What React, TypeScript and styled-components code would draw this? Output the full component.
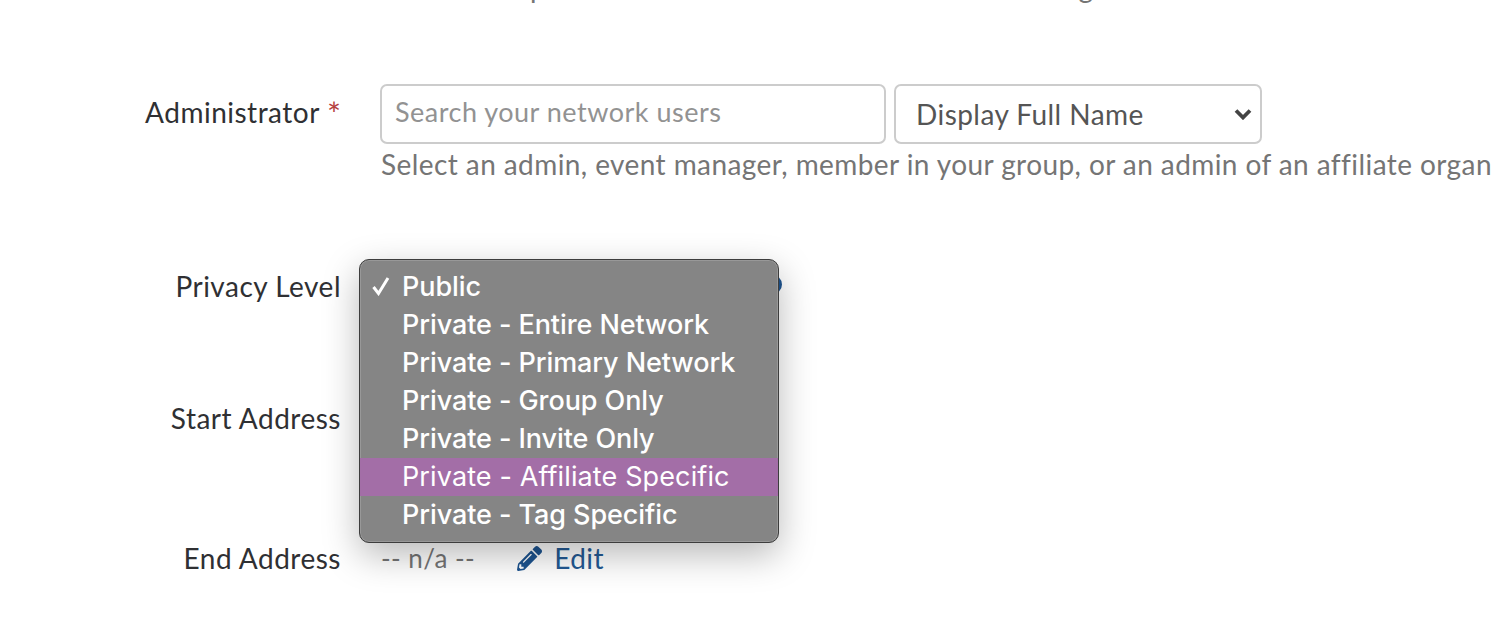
import React from "react";
import styled, { createGlobalStyle } from "styled-components";

const Global = createGlobalStyle`
  html, body { margin: 0; padding: 0; background: #fff; }
  body { font-family: "Lato", "Liberation Sans", sans-serif; overflow: hidden; }
`;

const Page = styled.div`
  position: relative;
  width: 1492px;
  height: 632px;
  overflow: hidden;
  background: #fff;
`;

const TopLine = styled.div`
  margin: -25px 0 0 381px;
  height: 25px;
  line-height: 25px;
  font-size: 28px;
  letter-spacing: 0.2px;
  color: #757575;
  white-space: nowrap;
`;

const Form = styled.div`
  display: flex;
  flex-direction: column;
  padding-top: 84px;
`;

const Row = styled.div<{ $height: number }>`
  display: grid;
  grid-template-columns: 341px 1fr;
  column-gap: 39px;
  height: ${(p) => p.$height}px;
  align-items: start;
`;

const Label = styled.div<{ $top: number }>`
  text-align: right;
  font-size: 28px;
  letter-spacing: 0.5px;
  line-height: 34px;
  color: #2f3033;
  padding-top: ${(p) => p.$top}px;
  white-space: nowrap;
`;

const Star = styled.span`
  color: #b5413f;
  font-size: 33px;
  line-height: 0;
  letter-spacing: 0;
  vertical-align: -3px;
`;

const Field = styled.div`
  display: flex;
  flex-direction: column;
  min-width: 0;
`;

const Controls = styled.div`
  display: flex;
  gap: 8px;
`;

const SearchInput = styled.div`
  box-sizing: border-box;
  width: 506px;
  height: 60px;
  border: 2px solid #cccccc;
  border-radius: 7px;
  padding: 0 13px 5px;
  display: flex;
  align-items: center;
  font-size: 27px;
  letter-spacing: 0.5px;
  color: #929292;
`;

const DisplaySelect = styled.div`
  box-sizing: border-box;
  width: 368px;
  height: 60px;
  border: 2px solid #cccccc;
  border-radius: 7px;
  padding: 0 8px 0 20px;
  display: flex;
  align-items: center;
  justify-content: space-between;
  font-size: 28px;
  letter-spacing: 0.45px;
  color: #555;
`;

const Help = styled.div`
  margin: 2px 0 0 1px;
  font-size: 28px;
  letter-spacing: 0.42px;
  line-height: 36px;
  color: #757575;
  white-space: nowrap;
`;

const ValueRow = styled.div`
  display: flex;
  align-items: center;
  height: 34px;
  margin: 10px 0 0 1px;
  font-size: 26px;
  letter-spacing: 0.45px;
  color: #757575;
`;

const EditLink = styled.span`
  display: inline-flex;
  align-items: center;
  gap: 12px;
  margin-left: 42px;
  font-size: 28px;
  color: #245a94;
`;

const Menu = styled.div`
  position: absolute;
  left: 359px;
  top: 259px;
  box-sizing: border-box;
  width: 420px;
  height: 284px;
  padding: 8px 0;
  background: #858585;
  border: 1px solid #3d3d3d;
  border-radius: 10px;
  box-shadow: 0 12px 36px rgba(0, 0, 0, 0.28), inset 0 0 0 1px rgba(255, 255, 255, 0.16);
  font-family: "Inter", "Liberation Sans", sans-serif;
  font-size: 27px;
  color: #fff;
`;

const MenuItem = styled.div<{ $active?: boolean }>`
  position: relative;
  height: 38px;
  line-height: 37px;
  padding-left: 42px;
  white-space: nowrap;
  background: ${(p) => (p.$active ? "#a36ea7" : "transparent")};
  font-weight: ${(p) => (p.$active ? 400 : 500)};
  letter-spacing: ${(p) => (p.$active ? "0.12px" : "-0.08px")};
`;

const Check = styled.svg`
  position: absolute;
  left: 11px;
  top: 8px;
`;

const Peek = styled.div`
  position: absolute;
  left: 772px;
  top: 275px;
  width: 10px;
  height: 19px;
  border-radius: 0 10px 10px 0;
  background: #1d5490;
`;

const options = [
  "Public",
  "Private - Entire Network",
  "Private - Primary Network",
  "Private - Group Only",
  "Private - Invite Only",
  "Private - Affiliate Specific",
  "Private - Tag Specific",
];

export default function App() {
  return (
    <Page>
      <Global />
      <TopLine>Manual or updates are made from the admin area and tag students and local ones</TopLine>
      <Form>
        <Row $height={175}>
          <Label $top={11}>
            Administrator <Star>*</Star>
          </Label>
          <Field>
            <Controls>
              <SearchInput>Search your network users</SearchInput>
              <DisplaySelect>
                Display Full Name
                <svg width="18" height="12" viewBox="0 0 18 12">
                  <path d="M2 2.5l7 7 7-7" fill="none" stroke="#444" strokeWidth="3.8" />
                </svg>
              </DisplaySelect>
            </Controls>
            <Help>Select an admin, event manager, member in your group, or an admin of an affiliate organization</Help>
          </Field>
        </Row>
        <Row $height={132}>
          <Label $top={10}>Privacy Level</Label>
          <Field />
        </Row>
        <Row $height={140}>
          <Label $top={10}>Start Address</Label>
          <Field />
        </Row>
        <Row $height={60}>
          <Label $top={10}>End Address</Label>
          <Field>
            <ValueRow>
              -- n/a --
              <EditLink>
                <svg width="25" height="25" viewBox="0 0 512 512" fill="#1d5490">
                  <path d="M497.9 142.1l-46.1 46.1c-4.7 4.7-12.3 4.7-17 0l-111-111c-4.7-4.7-4.7-12.3 0-17l46.1-46.1c18.7-18.7 49.1-18.7 67.9 0l60.1 60.1c18.8 18.7 18.8 49.1 0 67.9zM284.2 99.8L21.6 362.4.4 483.9c-2.9 16.4 11.4 30.6 27.8 27.8l121.5-21.3 262.6-262.6c4.7-4.7 4.7-12.3 0-17l-111-111c-4.8-4.7-12.4-4.7-17.1 0zM124.1 339.9c-5.5-5.5-5.5-14.3 0-19.8l154-154c5.5-5.5 14.3-5.5 19.8 0s5.5 14.3 0 19.8l-154 154c-5.5 5.5-14.3 5.5-19.8 0zM88 424h48v36.3l-64.5 11.3-31.1-31.1L51.7 376H88v48z" />
                </svg>
                Edit
              </EditLink>
            </ValueRow>
          </Field>
        </Row>
      </Form>
      <Peek />
      <Menu>
        {options.map((o, i) => (
          <MenuItem key={o} $active={i === 5}>
            {i === 0 && (
              <Check width="20" height="20" viewBox="0 0 20 20">
                <path d="M2.5 11l5 6.5 9.5-15.5" fill="none" stroke="#fff" strokeWidth="3" />
              </Check>
            )}
            {o}
          </MenuItem>
        ))}
      </Menu>
    </Page>
  );
}
